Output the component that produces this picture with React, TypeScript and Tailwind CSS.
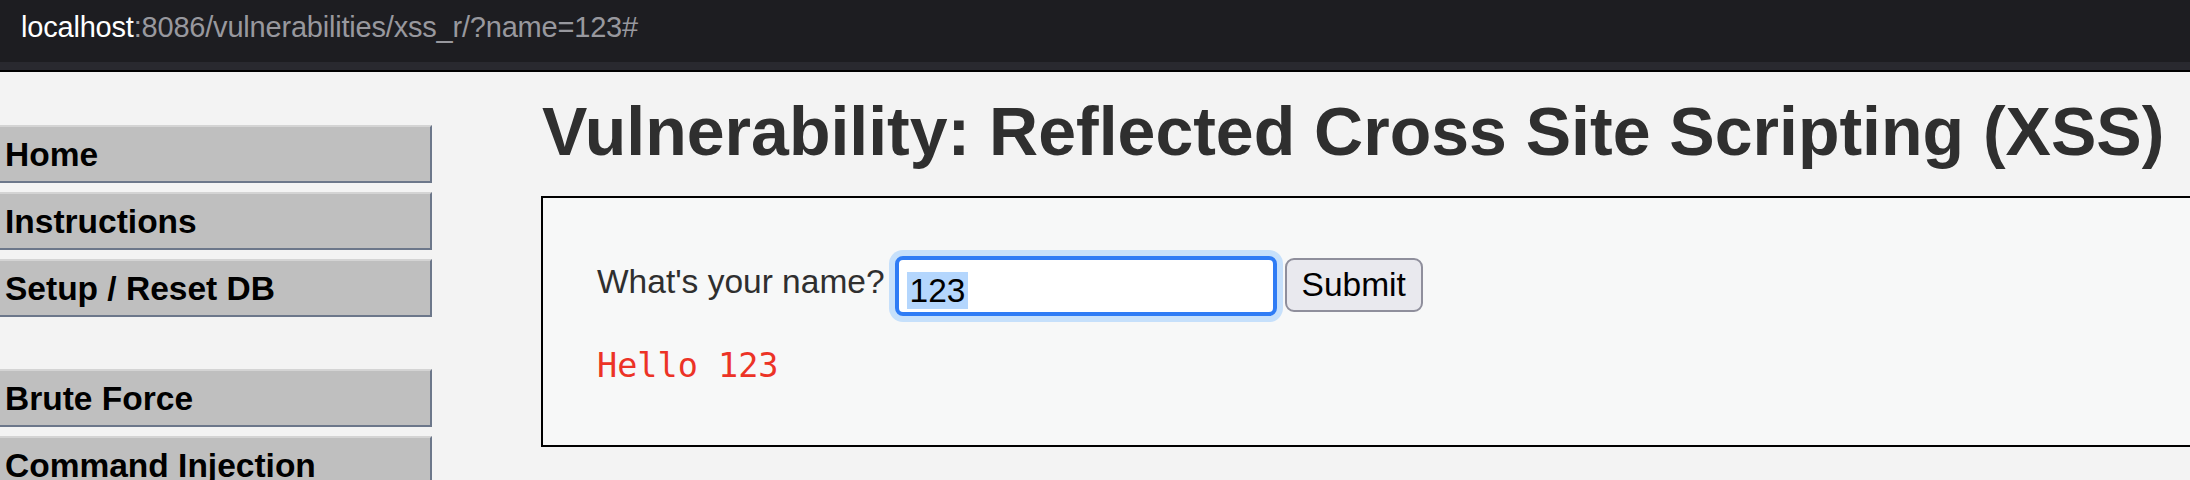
const MENU_TOP = ['Home', 'Instructions', 'Setup / Reset DB'];
const MENU_VULNS = ['Brute Force', 'Command Injection'];

function MenuItem({ label }: { label: string }) {
  return (
    <div className="h-[58px] w-[432px] border-t-2 border-r-2 border-b-2 border-t-[#d4d4d4] border-r-[#6c778a] border-b-[#6c778a] bg-[#bfbfbf] pl-[5px] pt-[11px] text-[33.5px] font-bold leading-none text-black">
      {label}
    </div>
  );
}

export default function App() {
  return (
    <div className="h-[480px] w-[2190px] overflow-hidden bg-[#f3f3f3] font-['Liberation_Sans',Arial,sans-serif]">
      {/* browser address bar */}
      <div className="h-[62px] bg-[#1d1d21] pl-[21px] pt-[13px] text-[29px] leading-none tracking-[-0.2px]">
        <span className="text-white">localhost</span>
        <span className="text-[#98989e]">:8086/vulnerabilities/xss_r/?name=123#</span>
      </div>
      <div className="h-[8px] bg-[#29292f]" />
      <div className="h-[2px] bg-black" />

      <div className="flex">
        {/* side menu */}
        <div className="flex w-[541px] shrink-0 flex-col pt-[53px]">
          <div className="flex flex-col gap-[9px]">
            {MENU_TOP.map((m) => (
              <MenuItem key={m} label={m} />
            ))}
          </div>
          <div className="mt-[52px] flex flex-col gap-[9px]">
            {MENU_VULNS.map((m) => (
              <MenuItem key={m} label={m} />
            ))}
          </div>
        </div>

        {/* main body */}
        <div className="flex shrink-0 flex-col">
          <h1 className="mt-[21px] pl-[1px] text-[68px] font-bold leading-[76px] whitespace-nowrap text-[#2f2f2f]">
            Vulnerability: Reflected Cross Site Scripting (XSS)
          </h1>

          <div className="mt-[27px] h-[251px] w-[1700px] border-2 border-black bg-[#f7f8f8] pl-[54px] pt-[58px]">
            <div className="flex items-start">
              <span className="mt-[9px] text-[33.5px] leading-none whitespace-nowrap text-[#2f2f2f]">
                What's your name?
              </span>
              <div className="ml-[10px] h-[60px] w-[382px] rounded-[8px] border-4 border-[#2f7cf5] bg-white pl-[8px] pt-[6px] shadow-[0_0_0_6px_#c6e0fb]">
                <span className="bg-[#b4d6fd] px-[3px] text-[33.5px] text-black">123</span>
              </div>
              <button className="ml-[8px] mt-[2px] h-[54px] rounded-[9px] border-2 border-[#8f8f9c] bg-[#e9e9ee] px-[15px] text-[33.5px] leading-none text-black">
                Submit
              </button>
            </div>
            <div className="mt-[33px] font-['DejaVu_Sans_Mono',monospace] text-[33.5px] leading-none text-[#ec3326]">
              Hello 123
            </div>
          </div>
        </div>
      </div>
    </div>
  );
}
